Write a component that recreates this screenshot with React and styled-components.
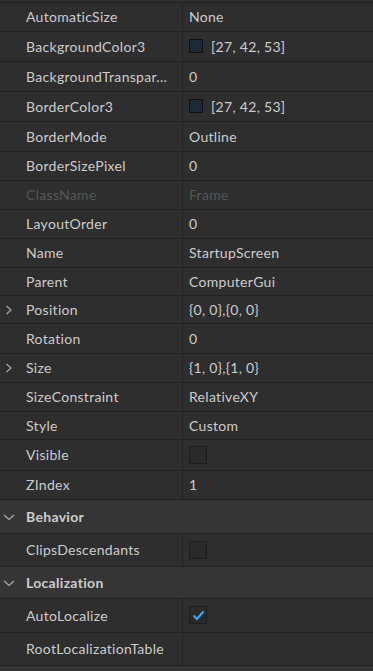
import React from 'react';
import styled, { createGlobalStyle } from 'styled-components';

const GlobalStyle = createGlobalStyle`
  html, body {
    margin: 0;
    padding: 0;
    background: #2e2e2e;
  }
  body {
    font-family: Lato, "Open Sans", sans-serif;
    letter-spacing: 0.3px;
  }
`;

const Panel = styled.div`
  width: 373px;
  height: 671px;
  overflow: hidden;
  background: #2e2e2e;
  display: flex;
  flex-direction: column;
`;

const TopSliver = styled.div`
  height: 2px;
  flex: none;
  border-bottom: 1px solid #222222;
`;

const Row = styled.div`
  height: ${(p) => p.$h}px;
  flex: none;
  display: grid;
  grid-template-columns: 183px 1fr;
  border-bottom: 1px solid #222222;
  box-sizing: border-box;
`;

const NameCell = styled.div`
  position: relative;
  display: flex;
  align-items: center;
  padding-left: 26px;
  padding-bottom: 1px;
  border-right: 1px solid #222222;
  font-size: 14px;
  color: ${(p) => (p.$disabled ? '#565656' : '#cccccc')};
  white-space: nowrap;
  overflow: hidden;
`;

const ValueCell = styled.div`
  display: flex;
  align-items: center;
  gap: 8px;
  padding-left: 6px;
  padding-bottom: 1px;
  font-size: 14px;
  color: ${(p) => (p.$disabled ? '#565656' : '#cccccc')};
  white-space: nowrap;
`;

const Expander = styled.svg`
  position: absolute;
  left: 5px;
  top: 50%;
  margin-top: -5px;
`;

const Header = styled.div`
  height: ${(p) => p.$h}px;
  flex: none;
  display: flex;
  align-items: center;
  padding-left: 26px;
  position: relative;
  background: #353535;
  border-bottom: 1px solid #222222;
  box-sizing: border-box;
  font-size: 14px;
  font-weight: 700;
  color: #cccccc;
`;

const Swatch = styled.span`
  width: 14px;
  height: 14px;
  box-sizing: border-box;
  background: ${(p) => p.$color};
  border: 1px solid #111111;
  flex: none;
`;

const Checkbox = styled.span`
  width: 18px;
  height: 18px;
  box-sizing: border-box;
  background: #2a2a2a;
  border: 1px solid #1c1c1c;
  display: flex;
  align-items: center;
  justify-content: center;
  flex: none;
`;

const BottomBar = styled.div`
  flex: 1;
  background: #353535;
`;

const Chevron = () => (
  <Expander width="8" height="10" viewBox="0 0 8 10">
    <path d="M1.5 1 L6 5 L1.5 9" fill="none" stroke="#aaaaaa" strokeWidth="1.2" />
  </Expander>
);

const OpenChevron = () => (
  <Expander width="12" height="10" viewBox="0 0 12 10" style={{ left: 3 }}>
    <path d="M1 3 L6 7.5 L11 3" fill="none" stroke="#aaaaaa" strokeWidth="1.2" />
  </Expander>
);

const Check = () => (
  <svg width="13" height="11" viewBox="0 0 13 11">
    <path d="M1.5 5.5 L5 9 L11.5 1.5" fill="none" stroke="#3ca8ff" strokeWidth="2" />
  </svg>
);

const props = [
  { name: 'AutomaticSize', value: 'None', h: 29 },
  { name: 'BackgroundColor3', value: '[27, 42, 53]', color: '#1b2a35', h: 30 },
  { name: 'BackgroundTranspar...', value: '0', h: 30 },
  { name: 'BorderColor3', value: '[27, 42, 53]', color: '#1b2a35', h: 30 },
  { name: 'BorderMode', value: 'Outline', h: 30 },
  { name: 'BorderSizePixel', value: '0', h: 29 },
  { name: 'ClassName', value: 'Frame', disabled: true, h: 29 },
  { name: 'LayoutOrder', value: '0', h: 29 },
  { name: 'Name', value: 'StartupScreen', h: 29 },
  { name: 'Parent', value: 'ComputerGui', h: 28 },
  { name: 'Position', value: '{0, 0},{0, 0}', expand: true, h: 28 },
  { name: 'Rotation', value: '0', h: 30 },
  { name: 'Size', value: '{1, 0},{1, 0}', expand: true, h: 29 },
  { name: 'SizeConstraint', value: 'RelativeXY', h: 29 },
  { name: 'Style', value: 'Custom', h: 28 },
  { name: 'Visible', check: false, h: 31 },
  { name: 'ZIndex', value: '1', h: 29 },
];

const PropRow = ({ p }) => (
  <Row $h={p.h}>
    <NameCell $disabled={p.disabled}>
      {p.expand && <Chevron />}
      {p.name}
    </NameCell>
    <ValueCell $disabled={p.disabled}>
      {p.color && <Swatch $color={p.color} />}
      {p.check !== undefined ? <Checkbox>{p.check && <Check />}</Checkbox> : p.value}
    </ValueCell>
  </Row>
);

export default function App() {
  return (
    <>
      <GlobalStyle />
      <Panel>
        <TopSliver />
        {props.map((p) => (
          <PropRow key={p.name} p={p} />
        ))}
        <Header $h={34}>
          <OpenChevron />
          Behavior
        </Header>
        <PropRow p={{ name: 'ClipsDescendants', check: false, h: 33 }} />
        <Header $h={32}>
          <OpenChevron />
          Localization
        </Header>
        <PropRow p={{ name: 'AutoLocalize', check: true, h: 34 }} />
        <PropRow p={{ name: 'RootLocalizationTable', value: '', h: 33 }} />
        <BottomBar />
      </Panel>
    </>
  );
}
